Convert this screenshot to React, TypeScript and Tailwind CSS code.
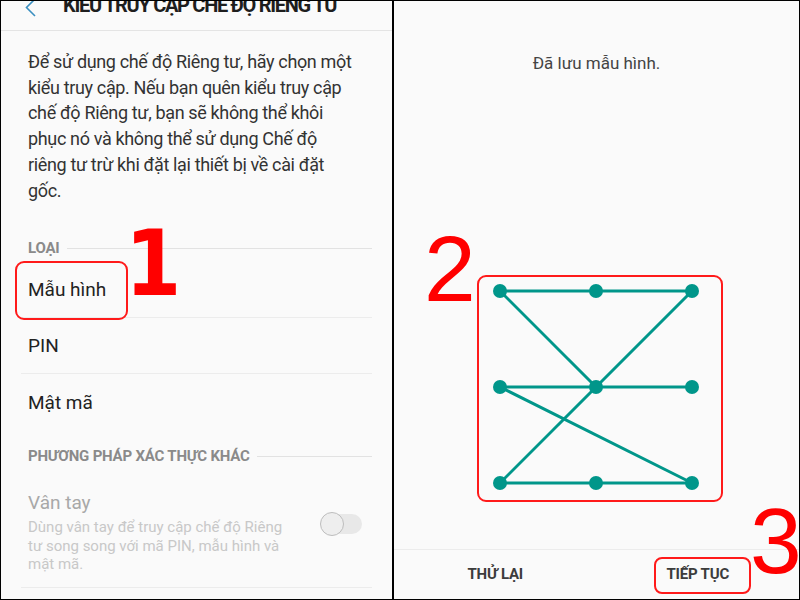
import React from "react";

const TEAL = "#00968a";

const dots = [
  [21, 14], [117, 14], [213, 14],
  [21, 110], [117, 110], [213, 110],
  [21, 206], [117, 206], [213, 206],
];

const lines: [number, number][] = [
  [0, 1], [1, 2], [0, 4], [2, 4], [4, 6],
  [3, 4], [4, 5], [3, 8], [6, 7], [7, 8],
];

const intro = [
  "Để sử dụng chế độ Riêng tư, hãy chọn một",
  "kiểu truy cập. Nếu bạn quên kiểu truy cập",
  "chế độ Riêng tư, bạn sẽ không thể khôi",
  "phục nó và không thể sử dụng Chế độ",
  "riêng tư trừ khi đặt lại thiết bị về cài đặt",
  "gốc.",
];

function SectionHeader({ label }: { label: string }) {
  return (
    <div className="flex items-center gap-[7px] pl-[27px] pr-[20px]">
      <span className="text-[15px] font-bold text-[#8a8a8a] leading-none tracking-[-0.2px]">{label}</span>
      <div className="flex-1 h-px bg-[#e2e2e2]" />
    </div>
  );
}

function Row({ label, last }: { label: string; last?: boolean }) {
  return (
    <div className={`mx-[20px] h-[56px] flex items-center px-[7px] ${last ? "" : "border-b border-[#ececec]"}`}>
      <span className="text-[19px] text-[#222222] leading-none">{label}</span>
    </div>
  );
}

export default function App() {
  return (
    <div
      className="relative w-[800px] h-[600px] border border-black flex bg-[#fafafa] overflow-hidden"
      style={{ fontFamily: "Roboto, 'Noto Sans', sans-serif" }}
    >
      {/* Left panel */}
      <div className="w-[391px] h-full flex flex-col bg-[#fafafa]">
        <div className="h-[30px] border-b border-[#e4e4e4] flex items-start overflow-hidden">
          <svg width="14" height="20" viewBox="0 0 14 20" className="ml-[23px] -mt-[3px]">
            <path d="M11 1 L2.5 9.5 L11 18" fill="none" stroke="#3a8fc0" strokeWidth="1.6" />
          </svg>
          <span className="ml-[25px] -mt-[6px] text-[20px] font-bold text-[#1e1e1e] leading-none tracking-[-1.3px] whitespace-nowrap">
            KIỂU TRUY CẬP CHẾ ĐỘ RIÊNG TƯ
          </span>
        </div>

        <div className="mt-[18px] px-[27px] text-[18px] leading-[25.7px] tracking-[-0.35px] text-[#333333]">
          {intro.map((line, i) => (
            <div key={i} className="whitespace-nowrap">{line}</div>
          ))}
        </div>

        <div className="mt-[32px] h-[27px] flex items-center">
          <div className="w-full">
            <SectionHeader label="LOẠI" />
          </div>
        </div>
        <Row label="Mẫu hình" />
        <Row label="PIN" />
        <Row label="Mật mã" last />

        <div className="h-[52px] flex items-center">
          <div className="w-full">
            <SectionHeader label="PHƯƠNG PHÁP XÁC THỰC KHÁC" />
          </div>
        </div>

        <div className="mx-[20px] px-[7px] pt-[9px] pb-[13px] border-b border-[#ececec] flex items-center">
          <div className="flex-1">
            <div className="text-[19px] leading-[24px] text-[#a8a8a8]">Vân tay</div>
            <div className="mt-[3px] text-[15px] leading-[18.5px] text-[#c8c8c8] w-[264px]">
              Dùng vân tay để truy cập chế độ Riêng tư song song với mã PIN, mẫu hình và mật mã.
            </div>
          </div>
          <div className="w-[41px] h-[20px] mr-[3px] mb-[16px] rounded-full bg-[#e8e8e8] flex items-center">
            <div className="w-[24px] h-[24px] -ml-[1px] rounded-full bg-[#eeeeee] border-[1.5px] border-[#bdbdbd]" />
          </div>
        </div>
      </div>

      {/* Divider */}
      <div className="w-[2px] h-full bg-black" />

      {/* Right panel */}
      <div className="flex-1 h-full flex flex-col bg-[#fafafa]">
        <div className="mt-[52px] text-center text-[17px] leading-[20px] text-[#444444]">Đã lưu mẫu hình.</div>

        <div className="mt-[202px] ml-[83px] w-[246px] h-[227px] border-2 border-[#ff1a1a] rounded-[9px]">
          <svg width="242" height="223" viewBox="0 0 242 223">
            {lines.map(([a, b], i) => (
              <line
                key={i}
                x1={dots[a][0]}
                y1={dots[a][1]}
                x2={dots[b][0]}
                y2={dots[b][1]}
                stroke={TEAL}
                strokeWidth="3"
              />
            ))}
            {dots.map(([x, y], i) => (
              <circle key={i} cx={x} cy={y} r="7" fill={TEAL} />
            ))}
          </svg>
        </div>

        <div className="flex-1" />
        <div className="h-px bg-[#ececec]" />
        <div className="h-[49px] flex">
          <button className="flex-1 text-[15px] font-bold text-[#3c3c3c] tracking-[-0.2px]">THỬ LẠI</button>
          <button className="flex-1 text-[15px] font-bold text-[#3c3c3c] tracking-[-0.2px]">TIẾP TỤC</button>
        </div>
      </div>

      {/* Annotations */}
      <div className="absolute left-[14px] top-[260px] w-[113px] h-[59px] border-2 border-[#ff1a1a] rounded-[9px]" />
      <div className="absolute left-[653px] top-[556px] w-[97px] h-[37px] border-2 border-[#ff1a1a] rounded-[8px]" />
      <div
        className="absolute left-[124px] top-[218px] text-[90px] leading-none font-bold text-[#ff0000]"
        style={{ fontFamily: "'DejaVu Sans Condensed', 'DejaVu Sans', sans-serif" }}
      >
        1
      </div>
      <div
        className="absolute left-[423px] top-[222px] text-[93px] leading-none text-[#ff0000]"
        style={{ fontFamily: "'Liberation Sans', Arial, sans-serif" }}
      >
        2
      </div>
      <div
        className="absolute left-[749px] top-[494px] text-[93px] leading-none text-[#ff0000]"
        style={{ fontFamily: "'Liberation Sans', Arial, sans-serif" }}
      >
        3
      </div>
    </div>
  );
}
